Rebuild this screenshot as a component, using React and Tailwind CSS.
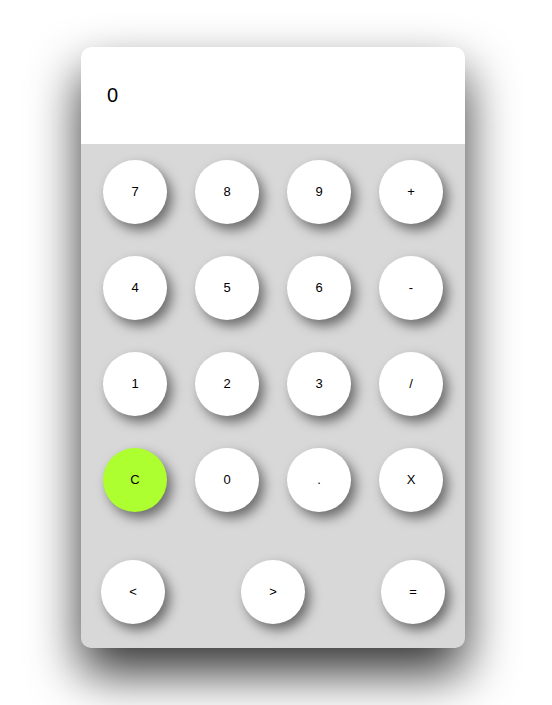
const keys = ["7", "8", "9", "+", "4", "5", "6", "-", "1", "2", "3", "/", "C", "0", ".", "X"];

function Key({ label, green }) {
  return (
    <button
      className={
        "w-16 h-16 rounded-full text-[13px] text-black shadow-[5px_6px_12px_rgba(0,0,0,0.5)] " +
        (green ? "bg-[#adff2f]" : "bg-white")
      }
    >
      {label}
    </button>
  );
}

export default function App() {
  return (
    <div className="min-h-[705px] bg-white pt-[47px] pl-[81px] font-['Liberation_Sans',Arial,sans-serif]">
      <div className="w-[384px] h-[601px] rounded-[10px] overflow-hidden bg-[#d8d8d8] shadow-[0_25px_50px_rgba(0,0,0,0.8)] flex flex-col">
        <div className="h-[97px] bg-white flex items-center pl-[26px] pb-[2px] text-[20px] text-black">0</div>
        <div className="grid grid-cols-4 gap-x-[28px] gap-y-[32px] px-[22px] pt-[16px]">
          {keys.map((k) => (
            <Key key={k} label={k} green={k === "C"} />
          ))}
        </div>
        <div className="flex justify-between px-5 mt-[48px]">
          <Key label="<" />
          <Key label=">" />
          <Key label="=" />
        </div>
      </div>
    </div>
  );
}
